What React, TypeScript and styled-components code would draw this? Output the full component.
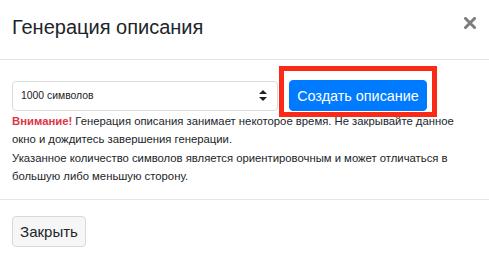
import React from 'react';
import styled, { createGlobalStyle } from 'styled-components';

const GlobalStyle = createGlobalStyle`
  html, body {
    margin: 0;
    padding: 0;
    background: #fff;
  }
  body {
    font-family: 'Liberation Sans', Arial, Helvetica, sans-serif;
    color: #212529;
  }
`;

const Modal = styled.div`
  width: 489px;
  display: flex;
  flex-direction: column;
  background: #fff;
`;

const Header = styled.div`
  flex-shrink: 0;
  height: 60px;
  box-sizing: border-box;
  display: flex;
  align-items: flex-start;
  justify-content: space-between;
  padding: 15px 12px 0 12px;
  border-bottom: 1px solid #e5e5e5;
`;

const Title = styled.h4`
  margin: 0;
  font-size: 20px;
  line-height: 24px;
  font-weight: 400;
  color: #212529;
`;

const CloseX = styled.button`
  border: 0;
  background: none;
  padding: 0;
  margin: 2px 1px 0 0;
  width: 12px;
  height: 12px;
  display: flex;
  cursor: pointer;
`;

const Body = styled.div`
  padding: 20px 12px 13px;
`;

const Controls = styled.div`
  display: flex;
  align-items: center;
  gap: 11px;
`;

const SelectBox = styled.div`
  width: 266px;
  height: 30px;
  box-sizing: border-box;
  border: 1px solid #dcdcdc;
  border-radius: 4px;
  display: flex;
  align-items: center;
  justify-content: space-between;
  padding: 0 10px 0 8px;
  font-size: 10.4px;
  color: #222;
`;

const ButtonWrap = styled.div`
  position: relative;
  display: flex;
`;

/* red annotation frame drawn over the button */
const Highlight = styled.div`
  position: absolute;
  left: -10px;
  top: -14px;
  right: -10px;
  bottom: -6px;
  border: 5px solid #fb2a17;
  pointer-events: none;
`;

const Button = styled.button<{ $variant: 'primary' | 'light' }>`
  font-family: 'Liberation Sans', Arial, Helvetica, sans-serif;
  border-radius: 4px;
  box-sizing: border-box;
  height: 31px;
  padding: 0;
  cursor: pointer;
  ${p =>
    p.$variant === 'primary'
      ? `
    width: 138px;
    background: #007bff;
    border: 1px solid #007bff;
    color: #fff;
    font-size: 14.4px;
  `
      : `
    width: 74px;
    background: #f6f6f6;
    border: 1px solid #d9d9d9;
    color: #212529;
    font-size: 15px;
  `}
`;

const Notice = styled.p`
  margin: 1px 0 0;
  font-size: 11.3px;
  line-height: 18.4px;
  color: #212529;
`;

const Warn = styled.b`
  color: #dc3545;
`;

const Footer = styled.div`
  border-top: 1px solid #e5e5e5;
  padding: 16px 12px;
`;

const Arrows = () => (
  <svg width="8" height="11" viewBox="0 0 8 11">
    <path d="M4 0 L8 4 L0 4 Z" fill="#222" />
    <path d="M4 11 L8 7 L0 7 Z" fill="#222" />
  </svg>
);

const App = (): JSX.Element => (
  <>
    <GlobalStyle />
    <Modal>
      <Header>
        <Title>Генерация описания</Title>
        <CloseX aria-label="close">
          <svg width="12" height="12" viewBox="0 0 12 12">
            <path
              d="M1.5 1.5 L10.5 10.5 M10.5 1.5 L1.5 10.5"
              stroke="#7d7d7d"
              strokeWidth="3"
              strokeLinecap="square"
            />
          </svg>
        </CloseX>
      </Header>
      <Body>
        <Controls>
          <SelectBox>
            <span>1000 символов</span>
            <Arrows />
          </SelectBox>
          <ButtonWrap>
            <Button $variant="primary">Создать описание</Button>
            <Highlight />
          </ButtonWrap>
        </Controls>
        <Notice>
          <Warn>Внимание!</Warn> Генерация описания занимает некоторое время. Не
          закрывайте данное окно и дождитесь завершения генерации.
          <br />
          Указанное количество символов является ориентировочным и может
          отличаться в большую либо меньшую сторону.
        </Notice>
      </Body>
      <Footer>
        <Button $variant="light">Закрыть</Button>
      </Footer>
    </Modal>
  </>
);

export default App;
